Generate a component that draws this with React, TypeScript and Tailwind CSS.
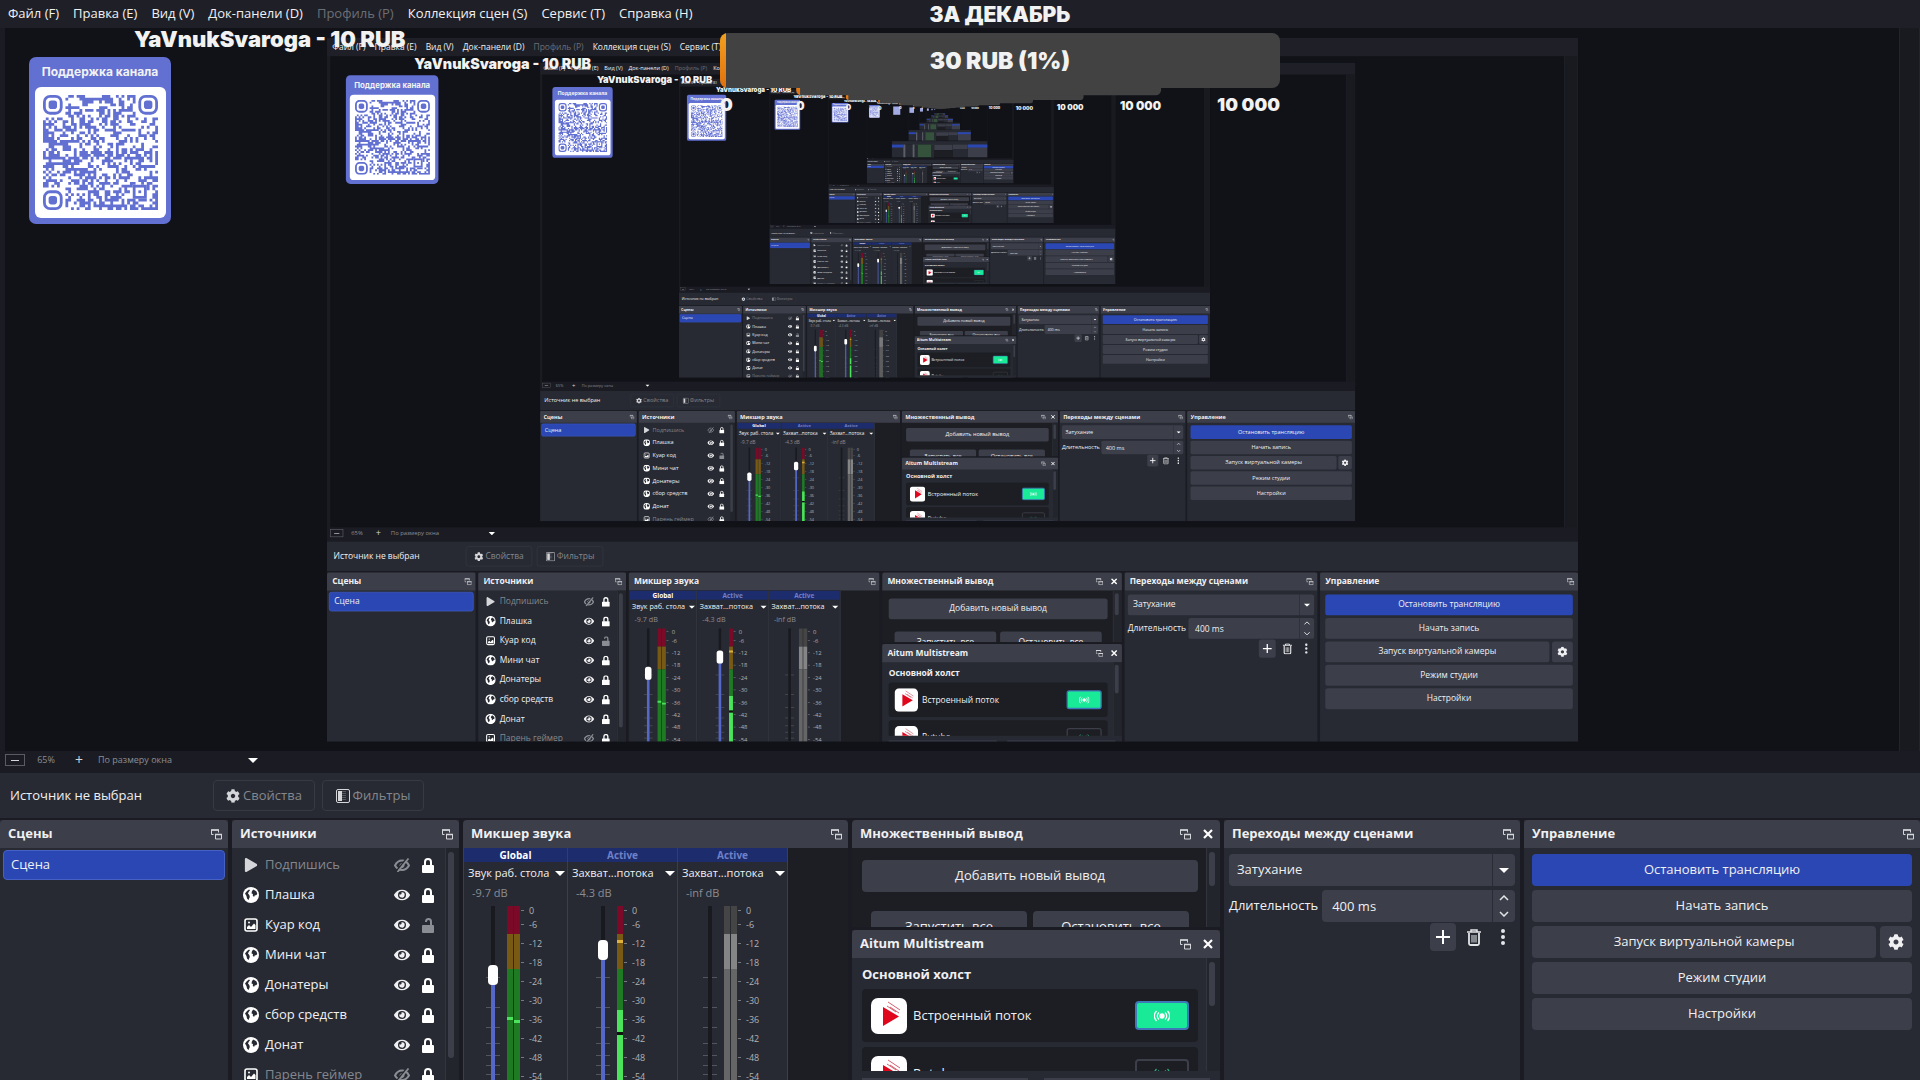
import React from 'react';
import { FaCog, FaEye, FaPlay } from 'react-icons/fa';

// the canvas shows a screen capture of the same window, so it repeats itself
const MAX_DEPTH = 6;
const MAX_BLOCK_DEPTH = 12;

interface Source {
    name: string;
    kind: 'play' | 'web' | 'image';
    visible: boolean;
    locked: boolean;
}

interface Strip {
    status: string;
    name: string;
    db: string;
    value: number;
    width: string;
    faderBox: string;
    meter: 'stereo' | 'mono' | 'muted';
}

const menuItems = ['Файл (F)', 'Правка (E)', 'Вид (V)', 'Док-панели (D)', 'Профиль (P)', 'Коллекция сцен (S)', 'Сервис (T)', 'Справка (H)'];

const sources: Source[] = [
    { name: 'Подпишись', kind: 'play', visible: false, locked: true },
    { name: 'Плашка', kind: 'web', visible: true, locked: true },
    { name: 'Куар код', kind: 'image', visible: true, locked: false },
    { name: 'Мини чат', kind: 'web', visible: true, locked: true },
    { name: 'Донатеры', kind: 'web', visible: true, locked: true },
    { name: 'сбор средств', kind: 'web', visible: true, locked: true },
    { name: 'Донат', kind: 'web', visible: true, locked: true },
    { name: 'Парень геймер', kind: 'image', visible: false, locked: true },
];

const strips: Strip[] = [
    { status: 'Global', name: 'Звук раб. стола', db: '-9.7 dB', value: 79, width: 'w-[104px]', faderBox: 'w-[43px] pl-[22px]', meter: 'stereo' },
    { status: 'Active', name: 'Захват...потока', db: '-4.3 dB', value: 88, width: 'w-[110px]', faderBox: 'w-[49px] pl-[28px]', meter: 'mono' },
    { status: 'Active', name: 'Захват...потока', db: '-inf dB', value: 0, width: 'w-[110px]', faderBox: 'w-[46px] pl-[25px]', meter: 'muted' },
];

const dbMarks = [0, -6, -12, -18, -24, -30, -36, -42, -48, -54];
const faderTicks = [71, 101, 121, 137, 149, 159, 168];

const QR_SIZE = 41;

const buildQrPath = (): string => {
    let seed = 77;
    let path = '';
    for (let y = 0; y < QR_SIZE; y++) {
        for (let x = 0; x < QR_SIZE; x++) {
            seed = (seed * 1103515245 + 12345) % 2147483648;
            const inFinder = (x < 8 && y < 8) || (x > QR_SIZE - 9 && y < 8) || (x < 8 && y > QR_SIZE - 9);
            const inMarker = x > 31 && x < 37 && y > 31 && y < 37;
            if (!inFinder && !inMarker && seed / 2147483648 > 0.5) {
                path += `M${x} ${y}h1v1h-1z`;
            }
        }
    }
    return path;
};

const qrPath = buildQrPath();

const QrCode: React.FC = () => (
    <svg viewBox={`0 0 ${QR_SIZE} ${QR_SIZE}`} className="w-[115px] h-[115px]" fill="#6270d2">
        <path d={qrPath} />
        {[[0, 0], [34, 0], [0, 34]].map(([x, y]) => (
            <g key={`${x}-${y}`}>
                <rect x={x + 0.5} y={y + 0.5} width="6" height="6" rx="2" fill="none" stroke="#6270d2" />
                <rect x={x + 2} y={y + 2} width="3" height="3" rx="1" />
            </g>
        ))}
        <rect x="32.5" y="32.5" width="4" height="4" fill="none" stroke="#6270d2" />
        <rect x="34" y="34" width="1" height="1" />
    </svg>
);

const PopOutIcon: React.FC = () => (
    <svg viewBox="0 0 11 11" className="w-[11px] h-[11px]" fill="none" stroke="#d5d6da">
        <path d="M.5 5.500V1h7v2.500M.5 5.500h2" />
        <path d="M0 1h8M4 5.500h7" strokeWidth="1.6" />
        <path d="M4.500 5v5h6V5" />
    </svg>
);

const CloseIcon: React.FC = () => (
    <svg viewBox="0 0 10 10" className="w-[10px] h-[10px]" stroke="#fff" strokeWidth="2.2">
        <path d="M1 1l8 8M9 1l-8 8" />
    </svg>
);

const Triangle: React.FC = () => (
    <svg viewBox="0 0 10 5" className="w-[10px] h-[5px] shrink-0" fill="#fff">
        <path d="M0 0h10l-5 5z" />
    </svg>
);

const SourceIcon: React.FC<{ kind: Source['kind'] }> = ({ kind }) => {
    if (kind === 'play') {
        return <FaPlay className="w-4 h-[14px] text-[#d5d6da]" />;
    }
    if (kind === 'image') {
        return (
            <svg viewBox="0 0 16 16" className="w-4 h-4">
                <rect x="2" y="2" width="12" height="12" rx="2" fill="none" stroke="#fff" strokeWidth="1.6" />
                <path d="M4 12V10l2-2 2 2 3-3.500 1.500 1.500V12z" fill="#fff" />
                <circle cx="6" cy="5.500" r="1" fill="#fff" />
            </svg>
        );
    }
    return (
        <svg viewBox="0 0 16 16" className="w-4 h-4">
            <circle cx="8" cy="8" r="8" fill="#fff" />
            <path d="M2 6.500L4 4l2-1.500 1 .8-1.200 1.500L5 6.500l1.300 1.500.5 2L5.500 13 4 11.500 3.500 9z" fill="#272a32" />
            <path d="M9 4l1.500-1.500 3 2 .8 2.500-1.500 1.500L12 8l-1 2-1.300-1.500.3-1.500-1.500-.5z" fill="#272a32" />
        </svg>
    );
};

const EyeOffIcon: React.FC = () => (
    <svg viewBox="0 0 16 14" className="w-4 h-[14px]" fill="none" stroke="#8b8d94">
        <path d="M1 7.500C3 3.500 6 2.500 8 2.500s5 1 7 5c-2 3.500-5 4.500-7 4.500s-5-1-7-4.500z" strokeWidth="2" />
        <circle cx="8" cy="7.500" r="2" fill="#8b8d94" />
        <path d="M2 13.500L12.500 .5" stroke="#272a32" strokeWidth="1.500" />
        <path d="M3.500 14L14.500 .5" strokeWidth="1.800" />
    </svg>
);

const LockIcon: React.FC<{ locked: boolean }> = ({ locked }) => (
    <svg viewBox="0 0 12 15" className="w-3 h-[15px]" fill={locked ? '#fff' : '#8b8d94'}>
        <rect x="0" y="7" width="12" height="8" rx="1" />
        <path d={locked ? 'M3 8V4a3 3 0 0 1 6 0v4' : 'M4 4V3.500a2.500 2.500 0 0 1 5 0V8'} fill="none" stroke={locked ? '#fff' : '#8b8d94'} strokeWidth="2" />
    </svg>
);

const TrashIcon: React.FC = () => (
    <svg viewBox="0 0 16 17" className="w-4 h-[17px]" fill="none" stroke="#e4e5e8">
        <path d="M1 3h14M5 3V1h6v2" strokeWidth="1.500" />
        <path d="M3 4v10.500q0 1.500 1.500 1.500h7q1.500 0 1.500-1.500V4" strokeWidth="1.800" />
        <path d="M6 6v7.500M8 6v7.500M10 6v7.500" />
    </svg>
);

const LiveIcon: React.FC<{ color: string }> = ({ color }) => (
    <svg viewBox="0 0 16 12" className="w-4 h-3" fill="none" stroke={color} strokeWidth="1.300">
        <circle cx="8" cy="6" r="2" fill={color} />
        <path d="M5 2.500a4.500 4.500 0 0 0 0 7M11 2.500a4.500 4.500 0 0 1 0 7M2.500 1a7 7 0 0 0 0 10M13.500 1a7 7 0 0 1 0 10" />
    </svg>
);

const StreamLogo: React.FC = () => (
    <svg viewBox="0 0 36 36" className="w-9 h-9 shrink-0">
        <rect width="36" height="36" rx="7" fill="#fff" />
        <path d="M12 9v19l16-9.500z" fill="#e0061c" />
        <path d="M17 4l12 8M19 9l9 6M16 8l9 6" stroke="#c8374a" strokeWidth=".8" />
    </svg>
);

const Dock: React.FC<{ title: string; closable?: boolean; className?: string; children: React.ReactNode }> = ({ title, closable, className = '', children }) => (
    <section className={`flex flex-col min-w-0 min-h-0 overflow-hidden ${className}`}>
        <header className="flex items-center h-7 shrink-0 pl-2 pr-[6px] gap-3 bg-[#3c3e49] rounded-t-sm">
            <h2 className="flex-1 truncate font-bold">{title}</h2>
            <button aria-label="Открепить"><PopOutIcon /></button>
            {closable && <button aria-label="Закрыть" className="pr-px"><CloseIcon /></button>}
        </header>
        {children}
    </section>
);

const Meter: React.FC<{ kind: Strip['meter'] }> = ({ kind }) => {
    const colors = kind === 'muted' ? ['#454545', '#858585', '#666666'] : ['#7b0a29', '#785a14', '#1f7a24'];
    const bars = kind === 'mono' ? [0] : [0, 7];
    return (
        <svg viewBox="0 0 14 300" className="w-[14px] h-[300px] shrink-0">
            {bars.map((x) => (
                <g key={x}>
                    <rect x={x} y="0" width="6" height="28" fill={colors[0]} />
                    <rect x={x} y="28" width="6" height="35" fill={colors[1]} />
                    <rect x={x} y="63" width="6" height="237" fill={colors[2]} />
                </g>
            ))}
            {kind === 'stereo' && <path d="M0 111h6v3h-6zM7 114h6v3h-6z" fill="#4be35c" />}
            {kind === 'mono' && (
                <>
                    <path d="M0 34h6v3h-6z" fill="#e0b13a" />
                    <path d="M0 104h6v22h-6zM0 129h6v171h-6z" fill="#4be35c" />
                    <path d="M0 126h6v3h-6z" fill="#10110f" />
                </>
            )}
        </svg>
    );
};

const MixerStrip: React.FC<{ strip: Strip }> = ({ strip }) => (
    <div className={`${strip.width} shrink-0 overflow-hidden border-r border-[#3c3e49] bg-[#272a32]`}>
        <div className={`h-[14px] bg-[#1c2c6c] text-center text-[10px] leading-[14px] font-bold ${strip.status === 'Global' ? 'text-white' : 'text-[#6f80c8]'}`}>
            {strip.status}
        </div>
        <button className="flex items-center justify-between w-full h-[22px] pl-1 pr-[2px] text-[11px] whitespace-nowrap">
            {strip.name}
            <Triangle />
        </button>
        <div className="h-[22px] pl-2 text-[11px] leading-[18px] text-[#8b8d94]">{strip.db}</div>
        <div className="flex">
            <div className={`grid ${strip.faderBox} h-[300px] shrink-0`}>
                <svg viewBox="0 0 14 300" className="col-start-1 row-start-1 w-[14px] h-[300px]" stroke="#54565f">
                    {faderTicks.map((y) => <path key={y} d={`M0 ${y}.5h5M9 ${y}.5h5`} />)}
                </svg>
                <input
                    type="range"
                    aria-label={`${strip.name} ${strip.db}`}
                    defaultValue={strip.value}
                    className="col-start-1 row-start-1 ml-[2px] w-[10px] h-[300px] appearance-none [writing-mode:vertical-lr] [direction:rtl] [&::-webkit-slider-thumb]:appearance-none [&::-webkit-slider-thumb]:w-[10px] [&::-webkit-slider-thumb]:h-5 [&::-webkit-slider-thumb]:rounded-[4px] [&::-webkit-slider-thumb]:bg-white"
                    style={{ background: `linear-gradient(to top, #5567c9 ${strip.value}%, #191a20 ${strip.value}%) center / 4px 100% no-repeat` }}
                />
            </div>
            <Meter kind={strip.meter} />
            <div className={`flex flex-col text-[9px] text-[#b0b1b6] ${strip.meter === 'mono' ? '-ml-[7px]' : ''}`}>
                {dbMarks.map((mark) => (
                    <div key={mark} className={`flex items-center gap-[5px] shrink-0 ${mark === 0 ? 'h-[9px]' : 'h-[19px]'}`}>
                        <span className="w-[3px] h-px bg-[#777981]" />
                        <span>{mark}</span>
                    </div>
                ))}
            </div>
        </div>
    </div>
);

const ScrollBar: React.FC<{ thumb: string }> = ({ thumb }) => (
    <div className="w-[14px] shrink-0 border-l border-[#33353e] pt-1 pl-[2px] bg-[#23252c]">
        <div className={`w-[6px] rounded-full bg-[#3c3e49] ${thumb}`} />
    </div>
);

const StreamRow: React.FC<{ name: string; live: boolean }> = ({ name, live }) => (
    <div className="flex items-center gap-[6px] h-[53px] shrink-0 px-[9px] rounded-sm bg-[#1d1e23]">
        <StreamLogo />
        <span className="flex-1">{name}</span>
        <button aria-label={`Поток ${name}`} className={`flex items-center justify-center w-[54px] h-[29px] rounded-sm border-2 ${live ? 'bg-[#18ea97] border-[#3f78b8]' : 'border-[#3c3e49]'}`}>
            <LiveIcon color={live ? '#fff' : '#2fae80'} />
        </button>
    </div>
);

const ControlButton: React.FC<{ active?: boolean; children: React.ReactNode }> = ({ active, children }) => (
    <button className={`flex-1 h-8 rounded-sm ${active ? 'bg-[#2b47b4]' : 'bg-[#3c3e49]'}`}>{children}</button>
);

const Docks: React.FC = () => (
    <div className="grid grid-cols-[228fr_227fr_385fr_368fr_296fr_396fr] gap-1 h-[260px] shrink-0 overflow-hidden">
        <Dock title="Сцены" className="bg-[#272a32]">
            <div className="px-[3px] pt-[2px]">
                <button className="w-full h-[30px] pl-[7px] rounded bg-[#2b47b4] border border-[#4660c4] text-left">Сцена</button>
            </div>
        </Dock>

        <Dock title="Источники" className="bg-[#272a32]">
            <div className="flex flex-1 min-h-0">
                <ul className="flex-1 pt-[2px] pl-[11px] pr-[11px]">
                    {sources.map((source) => (
                        <li key={source.name} className="flex items-center h-[30px]">
                            <SourceIcon kind={source.kind} />
                            <span className={`flex-1 pl-[6px] whitespace-nowrap ${source.visible ? '' : 'text-[#85878e]'}`}>{source.name}</span>
                            <button aria-label="Видимость" className="mr-3">
                                {source.visible ? <FaEye className="w-4 h-4" /> : <EyeOffIcon />}
                            </button>
                            <button aria-label="Блокировка"><LockIcon locked={source.locked} /></button>
                        </li>
                    ))}
                </ul>
                <ScrollBar thumb="h-[206px]" />
            </div>
        </Dock>

        <Dock title="Микшер звука" className="bg-[#1d1e23]">
            <div className="flex flex-1 min-h-0 border-l border-[#3c3e49]">
                {strips.map((strip) => <MixerStrip key={strip.db} strip={strip} />)}
            </div>
        </Dock>

        <div className="flex flex-col gap-[3px] min-w-0 min-h-0">
            <Dock title="Множественный вывод" closable className="h-[107px] shrink-0 bg-[#1d1e23]">
                <div className="flex flex-1 min-h-0">
                    <div className="flex-1 pt-3 pl-[10px] pr-2">
                        <button className="w-full h-8 rounded bg-[#3c3e49]">Добавить новый вывод</button>
                        <div className="flex gap-[6px] px-[9px] pt-[19px]">
                            <button className="flex-1 h-8 rounded bg-[#3c3e49]">Запустить все</button>
                            <button className="flex-1 h-8 rounded bg-[#3c3e49]">Остановить все</button>
                        </div>
                    </div>
                    <ScrollBar thumb="h-[34px]" />
                </div>
            </Dock>
            <Dock title="Aitum Multistream" closable className="flex-1 bg-[#272a32]">
                <div className="flex flex-1 min-h-0">
                    <div className="flex flex-col flex-1 gap-[5px] pt-[7px] pl-[10px] pr-2 overflow-hidden">
                        <h3 className="h-[19px] leading-[19px] font-bold">Основной холст</h3>
                        <StreamRow name="Встроенный поток" live />
                        <StreamRow name="Rutube" live={false} />
                    </div>
                    <ScrollBar thumb="h-11" />
                </div>
                <div className="flex gap-4 px-[10px] pt-[7px] shrink-0">
                    <div className="flex-1 h-[2px] bg-[#3c3e49]" />
                    <div className="flex-1 h-[2px] bg-[#3c3e49]" />
                </div>
            </Dock>
        </div>

        <Dock title="Переходы между сценами" className="bg-[#272a32]">
            <div className="flex flex-col gap-1 px-[5px] pt-[6px]">
                <div className="relative">
                    <select aria-label="Переход" className="w-full h-8 pl-2 rounded bg-[#3c3e49] appearance-none">
                        <option>Затухание</option>
                    </select>
                    <span className="absolute inset-y-0 right-0 flex items-center w-[23px] justify-center border-l border-[#2a2c35] pointer-events-none"><Triangle /></span>
                </div>
                <label className="flex items-center gap-1 whitespace-nowrap">
                    Длительность
                    <span className="relative flex-1 min-w-0">
                        <input defaultValue="400 ms" className="w-full h-8 pl-[10px] rounded bg-[#3c3e49]" />
                        <span className="absolute inset-y-0 right-0 flex items-center justify-center w-[23px] border-l border-[#2a2c35]">
                            <svg viewBox="0 0 10 22" className="w-[10px] h-[22px]" fill="none" stroke="#e4e5e8" strokeWidth="1.500">
                                <path d="M1 5l4-4 4 4M1 17l4 4 4-4" />
                            </svg>
                        </span>
                    </span>
                </label>
                <div className="flex justify-end items-center -mt-[3px]">
                    <button aria-label="Добавить" className="flex items-center justify-center w-[26px] h-7 rounded-sm bg-[#3c3e49]">
                        <svg viewBox="0 0 14 14" className="w-[14px] h-[14px]" stroke="#fff" strokeWidth="2"><path d="M7 0v14M0 7h14" /></svg>
                    </button>
                    <button aria-label="Удалить" className="flex items-center justify-center w-[35px] h-7"><TrashIcon /></button>
                    <button aria-label="Ещё" className="flex items-center justify-center w-6 h-7">
                        <svg viewBox="0 0 4 16" className="w-1 h-4" fill="#e4e5e8">
                            <circle cx="2" cy="2" r="2" /><circle cx="2" cy="8" r="2" /><circle cx="2" cy="14" r="2" />
                        </svg>
                    </button>
                </div>
            </div>
        </Dock>

        <Dock title="Управление" className="bg-[#272a32]">
            <div className="flex flex-col gap-1 px-2 pt-[6px]">
                <div className="flex"><ControlButton active>Остановить трансляцию</ControlButton></div>
                <div className="flex"><ControlButton>Начать запись</ControlButton></div>
                <div className="flex gap-1">
                    <ControlButton>Запуск виртуальной камеры</ControlButton>
                    <button aria-label="Настройки камеры" className="flex items-center justify-center w-8 h-8 rounded-sm bg-[#3c3e49]"><FaCog className="w-4 h-4" /></button>
                </div>
                <div className="flex"><ControlButton>Режим студии</ControlButton></div>
                <div className="flex"><ControlButton>Настройки</ControlButton></div>
            </div>
        </Dock>
    </div>
);

const ContextBar: React.FC = () => (
    <div className="flex items-center h-[45px] shrink-0 mb-[2px] pl-[10px] bg-[#272a32]">
        <span className="w-[203px]">Источник не выбран</span>
        <button className="flex items-center justify-center gap-[3px] w-[102px] h-[31px] mr-[7px] rounded-sm border border-[#373943] text-[#85878e]">
            <FaCog className="w-[14px] h-[14px] text-[#d5d6da]" />
            Свойства
        </button>
        <button className="flex items-center justify-center gap-[3px] w-[102px] h-[31px] rounded-sm border border-[#373943] text-[#85878e]">
            <svg viewBox="0 0 14 14" className="w-[14px] h-[14px]">
                <rect x="0.5" y="0.5" width="13" height="13" rx="1.500" fill="none" stroke="#d5d6da" />
                <rect x="2" y="2" width="4" height="10" fill="#d5d6da" />
                <path d="M7 2v10M9 2v10" stroke="#85878e" strokeDasharray="1 1" />
            </svg>
            Фильтры
        </button>
    </div>
);

// donation widgets rendered over the captured screen
const Overlays: React.FC = () => (
    <div className="absolute inset-0 font-['Inter',sans-serif] font-black text-[#f2f2f2] pointer-events-none">
        <p className="absolute left-[134px] top-[26px] text-[22px] leading-[26px] whitespace-nowrap">YaVnukSvaroga - 10 RUB</p>
        <div className="absolute left-[29px] top-[57px] flex flex-col items-center w-[142px] h-[167px] rounded-[7px] bg-[#6270d2]">
            <p className="h-[30px] leading-[30px] text-[12px] font-bold whitespace-nowrap">Поддержка канала</p>
            <div className="flex items-center justify-center w-[131px] h-[131px] rounded-md bg-white"><QrCode /></div>
        </div>
        <div className="absolute left-[720px] top-0 w-[560px]">
            <p className="h-[33px] text-center text-[21px] leading-[29px]">ЗА ДЕКАБРЬ</p>
            <div className="relative h-[55px] rounded-lg overflow-hidden bg-[#424242] text-center text-[23px] leading-[56px]">
                <span className="absolute left-0 inset-y-0 w-[6px] bg-linear-to-b from-[#f2a01e] to-[#e0700f]" />
                30 RUB (1%)
            </div>
            <div className="flex justify-between text-[18px] leading-[34px]">
                <span>0</span>
                <span>10 000</span>
            </div>
        </div>
    </div>
);

// past a few levels only blocks of colour are left to see
const BlockScreen: React.FC<{ depth: number }> = ({ depth }) => (
    <div className="relative flex flex-col w-full h-full overflow-hidden bg-[#1b1c23]">
        <div className="h-7 shrink-0 bg-[#1f2027]" />
        <div className="flex flex-1 min-h-0 items-center justify-center bg-[#111218]">
            <Capture depth={depth} />
        </div>
        <div className="h-[67px] shrink-0 bg-[#272a32]" />
        <div className="grid grid-cols-[228fr_227fr_385fr_368fr_296fr_396fr] gap-1 h-[260px] shrink-0">
            <div className="border-t-[60px] border-[#2b47b4] bg-[#272a32]" />
            <div className="border-x-[40px] border-[#5c5e68] bg-[#272a32]" />
            <div className="border-x-[60px] border-[#272a32] bg-[#35523c]" />
            <div className="border-t-[110px] border-[#3c3e49] bg-[#1d1e23]" />
            <div className="border-t-[90px] border-[#3c3e49] bg-[#272a32]" />
            <div className="border-t-[60px] border-[#2b47b4] bg-[#3c3e49]" />
        </div>
        <div className="absolute left-[29px] top-[57px] w-[142px] h-[167px] bg-[#a3abe4]" />
        <div className="absolute left-[720px] top-[33px] w-[560px] h-[55px] bg-[#424242]" />
    </div>
);

const Capture: React.FC<{ depth: number }> = ({ depth }) => {
    if (depth >= MAX_BLOCK_DEPTH) {
        return null;
    }
    return (
        <div className="w-[1251px] h-[704px] mt-px shrink-0" aria-hidden={depth === 0} inert={depth === 0}>
            <div className="w-[1920px] h-[1080px] origin-top-left scale-[0.6516]">
                {depth < MAX_DEPTH ? <Screen depth={depth + 1} /> : <BlockScreen depth={depth + 1} />}
            </div>
        </div>
    );
};

const Screen: React.FC<{ depth: number }> = ({ depth }) => (
    <div className="relative flex flex-col w-full h-full overflow-hidden bg-[#1b1c23] text-[#f0f0f2] text-[13px] font-['Open_Sans','Noto_Sans',sans-serif]">
        <nav className="flex items-center gap-[14px] h-[28px] shrink-0 px-2 bg-[#1f2027]">
            {menuItems.map((item) => (
                <button key={item} className={item.startsWith('Профиль') ? 'text-[#6c6e76]' : ''}>{item}</button>
            ))}
        </nav>
        <main className="flex flex-1 min-h-0 pl-[5px]">
            <div className="flex flex-1 min-w-0 items-center justify-center overflow-hidden bg-[#111218]">
                <Capture depth={depth} />
            </div>
            <div className="w-[21px] shrink-0 border-x border-[#22242b] bg-[#191a20]" />
        </main>
        <div className="flex items-center h-[18px] shrink-0 mb-1 pl-[5px] text-[9px] text-[#8b8d94]">
            <button aria-label="Уменьшить" className="flex items-center justify-center w-5 h-3 border border-[#5a5c65]">
                <span className="w-2 h-px bg-[#d5d6da]" />
            </button>
            <span className="w-[42px] text-center">65%</span>
            <button aria-label="Увеличить" className="w-6 text-center text-sm leading-none text-[#d5d6da]">+</button>
            <button className="flex items-center justify-between w-[167px] pl-[7px]">
                По размеру окна
                <Triangle />
            </button>
        </div>
        <ContextBar />
        <Docks />
        <Overlays />
    </div>
);

const App: React.FC = () => (
    <div className="w-full h-screen overflow-hidden">
        <Screen depth={0} />
    </div>
);

export default App;
